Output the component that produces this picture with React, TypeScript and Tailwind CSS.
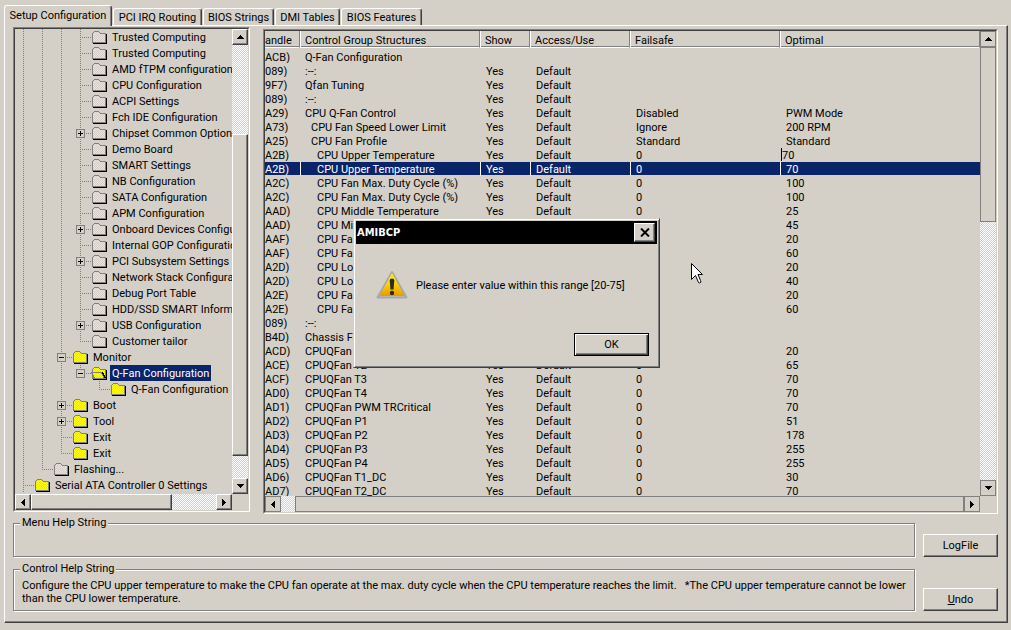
import { Fragment } from "react"
import type { ReactNode } from "react"

type Guide = "line" | "tee" | "end" | "none"

interface TreeItem {
  label: string
  level: number
  box?: "plus" | "minus"
  open?: boolean
  selected?: boolean
  last?: boolean
}

const treeItems: TreeItem[] = [
  { label: "Trusted Computing", level: 4 },
  { label: "Trusted Computing", level: 4 },
  { label: "AMD fTPM configuration", level: 4 },
  { label: "CPU Configuration", level: 4 },
  { label: "ACPI Settings", level: 4 },
  { label: "Fch IDE Configuration", level: 4 },
  { label: "Chipset Common Options", level: 4, box: "plus" },
  { label: "Demo Board", level: 4 },
  { label: "SMART Settings", level: 4 },
  { label: "NB Configuration", level: 4 },
  { label: "SATA Configuration", level: 4 },
  { label: "APM Configuration", level: 4 },
  { label: "Onboard Devices Configuration", level: 4, box: "plus" },
  { label: "Internal GOP Configuration", level: 4 },
  { label: "PCI Subsystem Settings", level: 4, box: "plus" },
  { label: "Network Stack Configuration", level: 4 },
  { label: "Debug Port Table", level: 4 },
  { label: "HDD/SSD SMART Information", level: 4 },
  { label: "USB Configuration", level: 4, box: "plus" },
  { label: "Customer tailor", level: 4, last: true },
  { label: "Monitor", level: 3, box: "minus" },
  { label: "Q-Fan Configuration", level: 4, box: "minus", open: true, selected: true, last: true },
  { label: "Q-Fan Configuration", level: 5, last: true },
  { label: "Boot", level: 3, box: "plus" },
  { label: "Tool", level: 3, box: "plus" },
  { label: "Exit", level: 3 },
  { label: "Exit", level: 3, last: true },
  { label: "Flashing...", level: 2, last: true },
  { label: "Serial ATA Controller 0 Settings", level: 1 },
]

interface Control {
  handle: string
  name: string
  indent?: 0 | 1 | 2
  failsafe?: string
  optimal?: string
  hidden?: boolean
  editing?: boolean
  selected?: boolean
}

const controls: Control[] = [
  { handle: "ACB)", name: "Q-Fan Configuration", hidden: true },
  { handle: "089)", name: ":--:" },
  { handle: "9F7)", name: "Qfan Tuning" },
  { handle: "089)", name: ":--:" },
  { handle: "A29)", name: "CPU Q-Fan Control", failsafe: "Disabled", optimal: "PWM Mode" },
  { handle: "A73)", name: "CPU Fan Speed Lower Limit", indent: 1, failsafe: "Ignore", optimal: "200 RPM" },
  { handle: "A25)", name: "CPU Fan Profile", indent: 1, failsafe: "Standard", optimal: "Standard" },
  { handle: "A2B)", name: "CPU Upper Temperature", indent: 2, failsafe: "0", optimal: "70", editing: true },
  { handle: "A2B)", name: "CPU Upper Temperature", indent: 2, failsafe: "0", optimal: "70", selected: true },
  { handle: "A2C)", name: "CPU Fan Max. Duty Cycle (%)", indent: 2, failsafe: "0", optimal: "100" },
  { handle: "A2C)", name: "CPU Fan Max. Duty Cycle (%)", indent: 2, failsafe: "0", optimal: "100" },
  { handle: "AAD)", name: "CPU Middle Temperature", indent: 2, failsafe: "0", optimal: "25" },
  { handle: "AAD)", name: "CPU Middle Temperature", indent: 2, failsafe: "0", optimal: "45" },
  { handle: "AAF)", name: "CPU Fan Middle. Duty Cycle (%)", indent: 2, failsafe: "0", optimal: "20" },
  { handle: "AAF)", name: "CPU Fan Middle. Duty Cycle (%)", indent: 2, failsafe: "0", optimal: "60" },
  { handle: "A2D)", name: "CPU Lower Temperature", indent: 2, failsafe: "0", optimal: "20" },
  { handle: "A2D)", name: "CPU Lower Temperature", indent: 2, failsafe: "0", optimal: "40" },
  { handle: "A2E)", name: "CPU Fan Min. Duty Cycle (%)", indent: 2, failsafe: "0", optimal: "20" },
  { handle: "A2E)", name: "CPU Fan Min. Duty Cycle (%)", indent: 2, failsafe: "0", optimal: "60" },
  { handle: "089)", name: ":--:" },
  { handle: "B4D)", name: "Chassis Fan Configuration" },
  { handle: "ACD)", name: "CPUQFan T1", failsafe: "0", optimal: "20" },
  { handle: "ACE)", name: "CPUQFan T2", failsafe: "0", optimal: "65" },
  { handle: "ACF)", name: "CPUQFan T3", failsafe: "0", optimal: "70" },
  { handle: "AD0)", name: "CPUQFan T4", failsafe: "0", optimal: "70" },
  { handle: "AD1)", name: "CPUQFan PWM TRCritical", failsafe: "0", optimal: "70" },
  { handle: "AD2)", name: "CPUQFan P1", failsafe: "0", optimal: "51" },
  { handle: "AD3)", name: "CPUQFan P2", failsafe: "0", optimal: "178" },
  { handle: "AD4)", name: "CPUQFan P3", failsafe: "0", optimal: "255" },
  { handle: "AD5)", name: "CPUQFan P4", failsafe: "0", optimal: "255" },
  { handle: "AD6)", name: "CPUQFan T1_DC", failsafe: "0", optimal: "30" },
  { handle: "AD7)", name: "CPUQFan T2_DC", failsafe: "0", optimal: "70" },
]

const indentClass = ["pl-1", "pl-[10px]", "pl-4"]

const raised =
  "border border-t-white border-l-white border-r-[#404040] border-b-[#404040] bg-[#d4d0c8] shadow-[inset_-1px_-1px_0_#808080]"
const flat = "border border-[#808080] bg-[#d4d0c8]"
const sunken =
  "border border-t-[#808080] border-l-[#808080] border-r-white border-b-white"
const sunkenInner =
  "border border-t-[#404040] border-l-[#404040] border-r-[#d4d0c8] border-b-[#d4d0c8]"
const dither =
  "bg-[conic-gradient(#fff_25%,#d4d0c8_0_50%,#fff_0_75%,#d4d0c8_0)] bg-[length:2px_2px]"

// which guide cells a row needs, one per ancestor level
function guidesFor(index: number): Guide[] {
  const item = treeItems[index]
  const guides: Guide[] = []
  for (let level = 1; level < item.level; level++) {
    const rest = treeItems.slice(index + 1)
    const stop = rest.findIndex((t) => t.level < level)
    const scope = stop === -1 ? rest : rest.slice(0, stop)
    guides.push(scope.some((t) => t.level === level) ? "line" : "none")
  }
  guides.push(item.last ? "end" : "tee")
  return guides
}

function GuideCell({ kind, box }: { kind: Guide; box?: "plus" | "minus" }) {
  return (
    <svg className="shrink-0" width="19" height="16" shapeRendering="crispEdges" fill="none">
      {kind !== "none" && (
        <path d={kind === "end" ? "M8.5 0V9" : "M8.5 0V16"} stroke="#808080" strokeDasharray="1 1" />
      )}
      {(kind === "tee" || kind === "end") && <path d="M10 8.5H19" stroke="#808080" strokeDasharray="1 1" />}
      {box && (
        <>
          <rect x="4.5" y="4.5" width="8" height="8" fill="#d4d0c8" stroke="#808080" />
          <path d={box === "plus" ? "M6 8.5h5M8.5 6v5" : "M6 8.5h5"} stroke="#000" />
        </>
      )}
    </svg>
  )
}

function FolderIcon({ open }: { open?: boolean }) {
  const fill = open ? "url(#folder-dither-open)" : "url(#folder-dither)"
  return (
    <svg className="shrink-0" width="19" height="16" shapeRendering="crispEdges" fill="none">
      <path d="M2 14.5H15.5V5" stroke="#000" />
      <path d="M1.5 13.5V4.5L3.5 2.5H7.5L9.5 4.5H14.5V13.5Z" fill={fill} stroke="#808080" />
      {open && (
        <>
          <path d="M0.5 7.5H10.5L13.5 13.5H3.5Z" fill={fill} stroke="#808080" />
          <path d="M11.5 7.5L14.5 13.5" stroke="#000" />
        </>
      )}
    </svg>
  )
}

function Arrow({ dir }: { dir: "up" | "down" | "left" | "right" }) {
  const paths = {
    up: "M3 0h1v1h1v1h1v1h1v1H0V3h1V2h1V1h1z",
    down: "M0 0h7v1H6v1H5v1H4v1H3V3H2V2H1V1H0z",
    left: "M4 0v7H3V6H2V5H1V4H0V3h1V2h1V1h1V0z",
    right: "M0 0v7h1V6h1V5h1V4h1V3H3V2H2V1H1V0z",
  }
  const tall = dir === "left" || dir === "right"
  return (
    <svg width={tall ? 4 : 7} height={tall ? 7 : 4} shapeRendering="crispEdges">
      <path d={paths[dir]} fill="#000" />
    </svg>
  )
}

function ScrollButton({ dir, look }: { dir: "up" | "down" | "left" | "right"; look: string }) {
  return (
    <button type="button" aria-label={`Scroll ${dir}`} className={`flex size-4 shrink-0 items-center justify-center ${look}`}>
      <Arrow dir={dir} />
    </button>
  )
}

function Tab({ className, selected, children }: { className: string; selected?: boolean; children: ReactNode }) {
  return (
    <button
      type="button"
      role="tab"
      aria-selected={!!selected}
      className={`rounded-t-[3px] border border-b-0 border-t-white border-l-white border-r-[#404040] bg-[#d4d0c8] shadow-[inset_-1px_0_0_#808080] ${className}`}
    >
      {children}
    </button>
  )
}

function TreePane() {
  return (
    <div className={`mb-0.5 flex w-[237px] shrink-0 ${sunken}`}>
      <div className={`flex min-w-0 flex-1 flex-col ${sunkenInner}`}>
        <div className="flex min-h-0 flex-1">
          <ul className="min-w-0 flex-1 overflow-hidden">
            {treeItems.map((item, i) => (
              <li key={i} className="flex h-4 items-center whitespace-nowrap">
                {guidesFor(i).map((kind, n) => (
                  <Fragment key={n}>
                    <GuideCell kind={kind} box={n === item.level - 1 ? item.box : undefined} />
                  </Fragment>
                ))}
                <FolderIcon open={item.open} />
                <span className={`h-4 px-0.5 pt-0.5 leading-[14px] ${item.selected ? "bg-[#0a246a] text-white" : ""}`}>
                  {item.label}
                </span>
              </li>
            ))}
          </ul>
          <div className={`flex w-4 shrink-0 flex-col ${dither}`}>
            <ScrollButton dir="up" look={raised} />
            <div className="flex-[89]"></div>
            <div className={`flex-[322] ${raised}`}></div>
            <div className="flex-[22]"></div>
            <ScrollButton dir="down" look={raised} />
          </div>
        </div>
        <div className="flex h-4 shrink-0">
          <div className={`flex flex-1 ${dither}`}>
            <ScrollButton dir="left" look={raised} />
            <div className={`flex-[141] ${raised}`}></div>
            <div className="flex-[44]"></div>
            <ScrollButton dir="right" look={raised} />
          </div>
          <div className="w-4"></div>
        </div>
      </div>
    </div>
  )
}

const columns = ["Control Group Structures", "Show", "Access/Use", "Failsafe", "Optimal"]

function ControlTable() {
  return (
    <table className="w-full table-fixed border-separate border-spacing-0 text-left whitespace-nowrap">
      <colgroup>
        <col className="w-[35px]" />
        <col className="w-[180px]" />
        <col className="w-[50px]" />
        <col className="w-[100px]" />
        <col className="w-[150px]" />
        <col />
      </colgroup>
      <thead>
        <tr>
          <th className="p-0 pb-0.5 font-normal">
            <div className="h-[17px] border-r border-b border-r-[#808080] border-b-white pt-0.5 leading-4 shadow-[inset_0_-1px_0_#808080]">
              andle
            </div>
          </th>
          {columns.map((name) => (
            <th key={name} className="p-0 pb-0.5 font-normal">
              <div className="h-[17px] border-r border-b border-l border-r-[#808080] border-b-white border-l-white pt-0.5 pl-1 leading-4 shadow-[inset_0_-1px_0_#808080]">
                {name}
              </div>
            </th>
          ))}
        </tr>
      </thead>
      <tbody>
        {controls.map((c, i) => {
          const cell = c.selected
            ? "overflow-hidden border-b border-l border-b-[#d4d0c8] border-l-white bg-[#0a246a] p-0 text-white"
            : "overflow-hidden border-b border-l border-[#d4d0c8] p-0"
          return (
            <tr key={i} className="h-[14px] leading-[11px]">
              <td className={`${cell} border-l-0 pt-0.5`}>{c.handle}</td>
              <td className={`${cell} pt-0.5 ${indentClass[c.indent ?? 0]}`}>{c.name}</td>
              <td className={`${cell} pt-0.5 pl-[5px]`}>{c.hidden ? "" : "Yes"}</td>
              <td className={`${cell} pt-0.5 pl-[5px]`}>{c.hidden ? "" : "Default"}</td>
              <td className={`${cell} pt-0.5 pl-[5px]`}>{c.failsafe}</td>
              <td className={c.editing ? cell : `${cell} pt-0.5 pl-[5px]`}>
                {c.editing ? (
                  <input
                    aria-label="Optimal value"
                    defaultValue={c.optimal}
                    className="block h-[13px] w-full border-l border-black bg-transparent pt-px leading-3 outline-none"
                  />
                ) : (
                  c.optimal
                )}
              </td>
            </tr>
          )
        })}
      </tbody>
    </table>
  )
}

function ListPane() {
  return (
    <div className={`mt-0.5 flex min-w-0 flex-1 ${sunken}`}>
      <div className={`flex min-w-0 flex-1 flex-col ${sunkenInner}`}>
        <div className="flex min-h-0 flex-1">
          <div className="min-w-0 flex-1 overflow-hidden">
            <ControlTable />
          </div>
          <div className={`flex w-4 shrink-0 flex-col ${dither}`}>
            <ScrollButton dir="up" look={flat} />
            <div className={`flex-[174] ${flat}`}></div>
            <div className="flex-[259]"></div>
            <ScrollButton dir="down" look={flat} />
          </div>
        </div>
        <div className="flex h-4 shrink-0">
          <div className={`flex flex-1 ${dither}`}>
            <ScrollButton dir="left" look={flat} />
            <div className="flex-[14]"></div>
            <div className={`flex-[669] ${flat}`}></div>
            <ScrollButton dir="right" look={flat} />
          </div>
          <div className="w-4"></div>
        </div>
      </div>
    </div>
  )
}

function GroupBox({ title, className, children }: { title: string; className: string; children?: ReactNode }) {
  return (
    <fieldset
      className={`min-w-0 border border-[#808080] pl-2 shadow-[1px_1px_0_#fff,inset_1px_1px_0_#fff] ${className}`}
    >
      <legend className="-ml-0.5 bg-[#d4d0c8] px-0.5 leading-[14px]">{title}</legend>
      {children}
    </fieldset>
  )
}

function WarningIcon() {
  return (
    <svg width="32" height="32" viewBox="0 0 32 32">
      <defs>
        <linearGradient id="warn-fill" x1="0" y1="0" x2="0" y2="1">
          <stop offset="0" stopColor="#fff200" />
          <stop offset="0.5" stopColor="#fdd000" />
          <stop offset="1" stopColor="#e89a00" />
        </linearGradient>
      </defs>
      <path d="M16 3L30.5 28.5H1.5Z" fill="#c0c0c0" stroke="#a8a8a8" strokeWidth="2" strokeLinejoin="round" />
      <path d="M16 4L28.5 27H3.5Z" fill="url(#warn-fill)" />
      <path d="M13.7 11.5Q13.7 9.5 16 9.5T18.3 11.5L17.5 20.5H14.5Z" fill="#2b2b2b" />
      <circle cx="16" cy="24" r="2.2" fill="#2b2b2b" />
    </svg>
  )
}

function MessageBox() {
  return (
    <div
      role="alertdialog"
      aria-label="AMIBCP"
      className="absolute top-[218px] left-[353px] h-[150px] w-[307px] border border-[#d4d0c8] border-r-[#404040] border-b-[#404040] bg-[#d4d0c8] shadow-[inset_1px_1px_0_#fff,inset_-1px_-1px_0_#808080]"
    >
      <div className="m-0.5 flex h-[23px] items-center justify-between bg-black pr-0.5 pl-px font-['DejaVu_Sans_Condensed','DejaVu_Sans',sans-serif] font-bold text-white">
        AMIBCP
        <button type="button" aria-label="Close" className={`flex h-[19px] w-[21px] items-center justify-center ${raised}`}>
          <svg width="10" height="9" viewBox="0 0 10 9">
            <path d="M1 0.5L9 8.5M9 0.5L1 8.5" stroke="#000" strokeWidth="2" />
          </svg>
        </button>
      </div>
      <div className="flex items-center gap-2 pt-[23px] pl-[22px]">
        <WarningIcon />
        <p>Please enter value within this range [20-75]</p>
      </div>
      <div className="flex justify-end pt-8 pr-[10px]">
        <button type="button" className="h-[23px] w-[75px] border border-black bg-[#d4d0c8] shadow-[inset_1px_1px_0_#fff,inset_-1px_-1px_0_#404040,inset_-2px_-2px_0_#808080]">
          OK
        </button>
      </div>
    </div>
  )
}

export default function App() {
  return (
    <div className="relative flex h-screen min-h-[400px] flex-col bg-[#d4d0c8] pt-[5px] pr-[3px] pb-[7px] pl-1 font-[Roboto,'Liberation_Sans',sans-serif] text-[11px] leading-[13px] text-black">
      <svg className="absolute" width="0" height="0">
        <defs>
          <pattern id="folder-dither" width="2" height="2" patternUnits="userSpaceOnUse">
            <rect width="2" height="2" fill="#d4d0c8" />
            <rect x="1" width="1" height="1" fill="#ff0" />
            <rect y="1" width="1" height="1" fill="#ff0" />
          </pattern>
          <pattern id="folder-dither-open" width="2" height="2" patternUnits="userSpaceOnUse">
            <rect width="2" height="2" fill="#d4d0c8" />
            <rect width="1" height="1" fill="#ff0" />
            <rect x="1" y="1" width="1" height="1" fill="#ff0" />
          </pattern>
        </defs>
      </svg>

      <div role="tablist" className="flex h-5 shrink-0 items-end gap-px">
        <Tab selected className="relative -mb-px h-[21px] w-[108px] pb-px">
          Setup Configuration
        </Tab>
        <Tab className="h-[17px] w-[89px]">PCI IRQ Routing</Tab>
        <Tab className="h-[17px] w-[71px]">BIOS Strings</Tab>
        <Tab className="h-[17px] w-[65px]">DMI Tables</Tab>
        <Tab className="h-[17px] w-[81px]">BIOS Features</Tab>
      </div>

      <main className="flex min-h-0 flex-1 flex-col border border-t-white border-r-[#404040] border-b-[#404040] border-l-white pt-px pr-[9px] pb-[11px] pl-2 shadow-[inset_-1px_-1px_0_#808080]">
        <div className="flex min-h-0 flex-1 gap-[13px]">
          <TreePane />
          <ListPane />
        </div>

        <div className="grid shrink-0 grid-cols-[1fr_75px] items-end gap-x-2 gap-y-[5px] pt-0.5">
          <GroupBox title="Menu Help String" className="h-[41px]" />
          <button type="button" className={`h-[23px] ${raised}`}>
            LogFile
          </button>
          <GroupBox title="Control Help String" className="h-[49px] pt-[3px]">
            <p>
              Configure the CPU upper temperature to make the CPU fan operate at the max. duty cycle when the CPU
              temperature reaches the limit.{"\u00a0\u00a0 "}*The CPU upper temperature cannot be lower than the CPU
              lower temperature.
            </p>
          </GroupBox>
          <button type="button" className={`h-[23px] ${raised}`}>
            <span className="underline">U</span>ndo
          </button>
        </div>
      </main>

      <MessageBox />

      <svg className="absolute top-[263px] left-[691px]" width="12" height="21">
        <path d="M0.5 0.5V16.5L4.5 12.5L7.5 19.5L8.5 20L10 19L9.5 17.5L7 11.5H11.5Z" fill="#fff" stroke="#000" />
      </svg>
    </div>
  )
}
